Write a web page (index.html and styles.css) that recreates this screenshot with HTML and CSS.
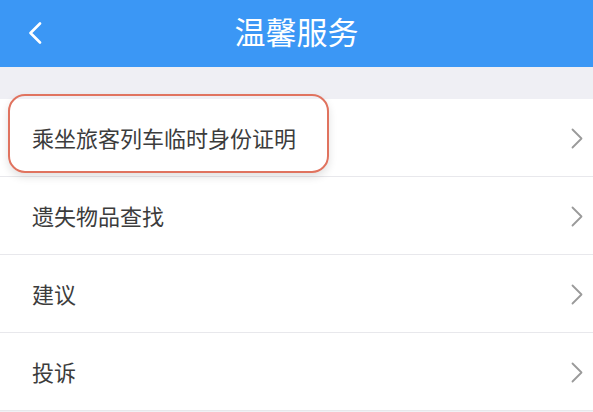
FILE: index.html
```html
<!DOCTYPE html>
<html lang="zh-CN">
<head>
<meta charset="utf-8">
<title>温馨服务</title>
<link rel="stylesheet" href="styles.css">
</head>
<body>
<header class="topbar">
  <span class="back">
    <svg width="14" height="22" viewBox="0 0 14 22"><path d="M12 1.5 L2.5 11 L12 20.5" fill="none" stroke="#fff" stroke-width="2.6" stroke-linecap="round" stroke-linejoin="round"/></svg>
  </span>
  <h1 class="title">温馨服务</h1>
</header>
<div class="gap"></div>
<ul class="list">
  <li class="row">
    <span class="label">乘坐旅客列车临时身份证明</span>
    <svg class="chev" width="12" height="21" viewBox="0 0 12 21"><path d="M1.5 1.5 L10.5 10.5 L1.5 19.5" fill="none" stroke="#9a9a9a" stroke-width="1.8" stroke-linecap="round" stroke-linejoin="round"/></svg>
    <span class="highlight"></span>
  </li>
  <li class="row">
    <span class="label">遗失物品查找</span>
    <svg class="chev" width="12" height="21" viewBox="0 0 12 21"><path d="M1.5 1.5 L10.5 10.5 L1.5 19.5" fill="none" stroke="#9a9a9a" stroke-width="1.8" stroke-linecap="round" stroke-linejoin="round"/></svg>
  </li>
  <li class="row">
    <span class="label">建议</span>
    <svg class="chev" width="12" height="21" viewBox="0 0 12 21"><path d="M1.5 1.5 L10.5 10.5 L1.5 19.5" fill="none" stroke="#9a9a9a" stroke-width="1.8" stroke-linecap="round" stroke-linejoin="round"/></svg>
  </li>
  <li class="row">
    <span class="label">投诉</span>
    <svg class="chev" width="12" height="21" viewBox="0 0 12 21"><path d="M1.5 1.5 L10.5 10.5 L1.5 19.5" fill="none" stroke="#9a9a9a" stroke-width="1.8" stroke-linecap="round" stroke-linejoin="round"/></svg>
  </li>
</ul>
</body>
</html>
```
FILE: styles.css
```css
* { box-sizing: border-box; }
html, body {
  margin: 0;
  padding: 0;
  background: #f1f1f5;
  font-family: "Noto Sans CJK SC", "Noto Sans", sans-serif;
}
.topbar {
  height: 67px;
  background: #3b97f5;
  display: flex;
  align-items: center;
  justify-content: center;
  position: relative;
}
.back {
  position: absolute;
  left: 28px;
  top: 22px;
  display: flex;
}
.title {
  margin: 0;
  color: #fff;
  font-size: 31px;
  font-weight: 400;
  letter-spacing: 0;
  line-height: 1;
  margin-top: -7px;
}
.gap {
  height: 32px;
  background: #efeff4;
}
.list {
  list-style: none;
  margin: 0;
  padding: 0;
  background: #fff;
}
.row {
  position: relative;
  height: 78px;
  border-bottom: 1px solid #e8e8ec;
  display: flex;
  align-items: center;
  justify-content: space-between;
  padding: 0 10px 0 32px;
}
.label {
  font-size: 22px;
  color: #3c3c3c;
  line-height: 1;
  margin-top: -2px;
}
.chev {
  display: block;
  margin-top: 2px;
}
.highlight {
  position: absolute;
  left: 8px;
  top: -5px;
  width: 321px;
  height: 79px;
  border: 2.5px solid #e0735f;
  border-radius: 17px;
  box-shadow: 0 4px 8px rgba(0,0,0,0.12);
  pointer-events: none;
}
```
